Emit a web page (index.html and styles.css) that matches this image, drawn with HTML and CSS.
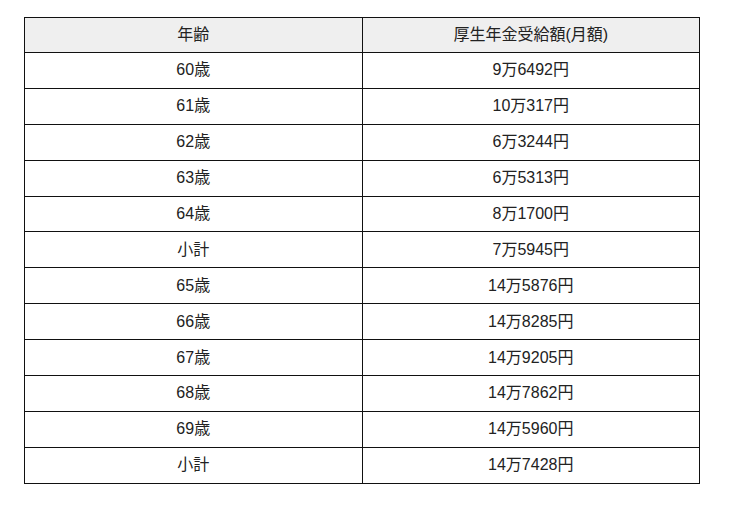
FILE: index.html
```html
<!DOCTYPE html>
<html lang="ja">
<head>
<meta charset="utf-8">
<link rel="stylesheet" href="styles.css">
</head>
<body>
<table class="pension">
  <thead>
    <tr><th>年齢</th><th>厚生年金受給額(月額)</th></tr>
  </thead>
  <tbody>
    <tr><td>60歳</td><td>9万6492円</td></tr>
    <tr><td>61歳</td><td>10万317円</td></tr>
    <tr><td>62歳</td><td>6万3244円</td></tr>
    <tr><td>63歳</td><td>6万5313円</td></tr>
    <tr><td>64歳</td><td>8万1700円</td></tr>
    <tr><td>小計</td><td>7万5945円</td></tr>
    <tr><td>65歳</td><td>14万5876円</td></tr>
    <tr><td>66歳</td><td>14万8285円</td></tr>
    <tr><td>67歳</td><td>14万9205円</td></tr>
    <tr><td>68歳</td><td>14万7862円</td></tr>
    <tr><td>69歳</td><td>14万5960円</td></tr>
    <tr><td>小計</td><td>14万7428円</td></tr>
  </tbody>
</table>
</body>
</html>
```

FILE: styles.css
```css
html, body {
  margin: 0;
  padding: 0;
  background: #fff;
}
body {
  padding: 17px 0 0 24px;
  font-family: "Liberation Sans", "Noto Sans CJK JP", sans-serif;
  font-size: 16px;
  color: #222;
}
.pension {
  border-collapse: collapse;
  width: 676px;
  table-layout: fixed;
}
.pension th,
.pension td {
  border: 1px solid #111;
  height: 34.9px;
  padding: 0;
  text-align: center;
  vertical-align: middle;
  font-weight: normal;
  line-height: 20px;
}
.pension th {
  height: 34px;
  background: #efefef;
}
```
